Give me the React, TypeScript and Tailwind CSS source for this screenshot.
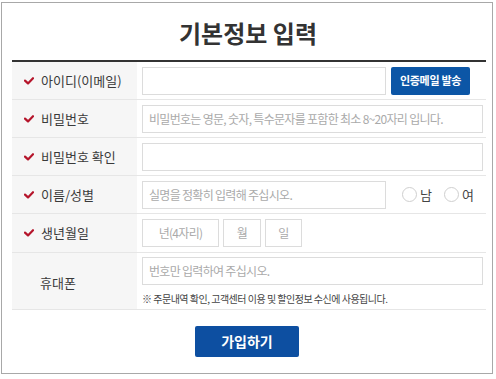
import React from "react";

const font = { fontFamily: '"Noto Sans CJK KR", "Noto Sans", sans-serif' };

function Check() {
  return (
    <svg width="10" height="8" viewBox="0 0 10 8" className="mr-[7px] shrink-0">
      <path d="M1 3.6 L4 6.4 L9 1.2" fill="none" stroke="#b5152b" strokeWidth="2.2" strokeLinecap="round" strokeLinejoin="round" />
    </svg>
  );
}

function Row({ label, check = true, h = "h-[38px]", children }: { label: string; check?: boolean; h?: string; children: React.ReactNode }) {
  return (
    <div className={`flex border-b border-[#e6e6e6] ${h}`}>
      <div className="w-[125px] shrink-0 bg-[#f6f6f6] flex items-center pl-[12px] text-[13px] text-[#3a3a3a]">
        {check ? <Check /> : <span className="w-[17px]" />}
        <span className={check ? "" : "ml-[-1px] mt-[3px]"}>{label}</span>
      </div>
      <div className="flex-1 pl-[5px] flex items-center">{children}</div>
    </div>
  );
}

function Input({ w, placeholder, center }: { w: string; placeholder?: string; center?: boolean }) {
  return (
    <div className={`${w} h-[28px] border border-[#dcdcdc] bg-white flex items-center ${center ? "justify-center" : "pl-[6px]"} text-[12px] tracking-[-0.7px] text-[#aaa]`}>
      {placeholder}
    </div>
  );
}

function Radio({ label }: { label: string }) {
  return (
    <div className="flex items-center">
      <span className="w-[15px] h-[15px] rounded-full border border-[#cfcfcf] bg-white mr-[3px]" />
      <span className="text-[13px] text-[#444]">{label}</span>
    </div>
  );
}

export default function App() {
  return (
    <div className="w-[496px] h-[379px] bg-white pl-[1px] pt-[2px]" style={font}>
      <div className="w-[492px] h-[372px] border border-[#a8a8a8] px-[10px] flex flex-col">
        <div className="h-[57px] flex items-center justify-center">
          <h1 className="text-[24px] font-bold text-[#333] mt-[2px] ml-[2px]">기본정보 입력</h1>
        </div>
        <div className="w-[474px] border-t-2 border-[#333]">
          <Row label="아이디(이메일)">
            <Input w="w-[244px]" />
            <button className="ml-[5px] w-[79px] h-[28px] bg-[#0c56a6] rounded-[2px] text-white text-[11px] font-bold tracking-[-0.3px]">인증메일 발송</button>
          </Row>
          <Row label="비밀번호">
            <Input w="w-[341px]" placeholder="비밀번호는 영문, 숫자, 특수문자를 포함한 최소 8~20자리 입니다." />
          </Row>
          <Row label="비밀번호 확인">
            <Input w="w-[341px]" />
          </Row>
          <Row label="이름/성별">
            <Input w="w-[244px]" placeholder="실명을 정확히 입력해 주십시오." />
            <div className="ml-[16px] flex items-center gap-[12px]">
              <Radio label="남" />
              <Radio label="여" />
            </div>
          </Row>
          <Row label="생년월일" h="h-[39px]">
            <div className="flex gap-[4px]">
              <Input w="w-[77px]" placeholder="년(4자리)" center />
              <Input w="w-[38px]" placeholder="월" center />
              <Input w="w-[37px]" placeholder="일" center />
            </div>
          </Row>
          <Row label="휴대폰" check={false} h="h-[57px]">
            <div className="flex flex-col">
              <Input w="w-[341px]" placeholder="번호만 입력하여 주십시오." />
              <div className="text-[10px] text-[#444] mt-[6px] tracking-[-0.5px]">※ 주문내역 확인, 고객센터 이용 및 할인정보 수신에 사용됩니다.</div>
            </div>
          </Row>
        </div>
        <div className="flex justify-center mt-[16px]">
          <button className="w-[104px] h-[31px] bg-[#0d4fa1] rounded-[2px] text-white text-[14px] font-bold">가입하기</button>
        </div>
      </div>
    </div>
  );
}
